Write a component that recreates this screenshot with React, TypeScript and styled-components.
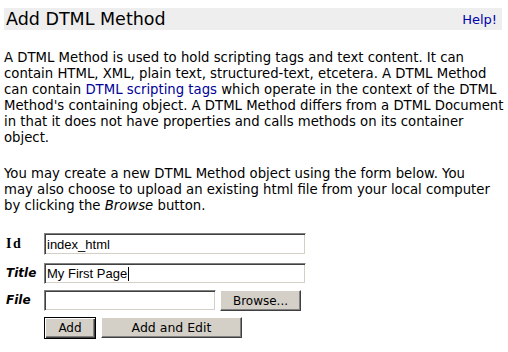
import React from "react";
import styled, { createGlobalStyle } from "styled-components";

const GlobalStyle = createGlobalStyle`
  html, body { margin: 0; padding: 0; background: #ffffff; }
`;

const Page = styled.div`
  padding: 8px 6px 0 4px;
  font-family: "DejaVu Sans", Verdana, sans-serif;
  font-size: 13.25px;
  color: #000000;
`;

const Header = styled.div`
  display: flex;
  justify-content: space-between;
  align-items: center;
  height: 22px;
  background: #eeeeee;
  padding: 0 5px 0 2px;
`;

const Title = styled.h1`
  margin: 0;
  font-size: 17.5px;
  font-weight: normal;
  line-height: 22px;
  color: #000000;
`;

const HelpLink = styled.a`
  font-size: 13px;
  color: #0000aa;
  text-decoration: none;
`;

const Para = styled.p`
  margin: 20px 0 0;
  line-height: 16px;
  white-space: nowrap;
`;

const InlineLink = styled.a`
  color: #000099;
  text-decoration: none;
`;

const Form = styled.form`
  display: grid;
  grid-template-columns: 40px auto;
  row-gap: 6px;
  margin-top: 19px;
  align-items: start;
`;

const Label = styled.label<{ $serif?: boolean }>`
  font-family: ${(p) =>
    p.$serif ? `"Liberation Serif", "Times New Roman", serif` : `"DejaVu Sans", Verdana, sans-serif`};
  font-size: ${(p) => (p.$serif ? "14px" : "12px")};
  letter-spacing: ${(p) => (p.$serif ? "1.5px" : "0")};
  font-weight: bold;
  font-style: ${(p) => (p.$serif ? "normal" : "italic")};
  padding: ${(p) => (p.$serif ? "3px 0 0 2px" : "2px 0 0 2px")};
  line-height: 16px;
`;

const FieldRow = styled.div<{ $extra?: number }>`
  display: flex;
  gap: 4px;
  align-items: center;
  padding-bottom: ${(p) => p.$extra ?? 0}px;
`;

const InputWrap = styled.div`
  position: relative;
  display: flex;
`;

const Caret = styled.span<{ $left: number }>`
  position: absolute;
  left: ${(p) => p.$left}px;
  top: 4px;
  width: 1px;
  height: 14px;
  background: #000000;
`;

const TextInput = styled.input<{ $w: number; $h?: number }>`
  box-sizing: border-box;
  width: ${(p) => p.$w}px;
  height: ${(p) => p.$h ?? 21}px;
  margin: 0;
  padding: 0 2px;
  border: 1px solid;
  border-color: #808080 #ffffff #ffffff #808080;
  box-shadow: inset 1px 1px #404040, inset -1px -1px #d4d0c8;
  font-family: "Liberation Sans", Arial, sans-serif;
  font-size: 13px;
  color: #000000;
  background: #ffffff;
  outline: none;
`;

const Button = styled.button<{ $w: number; $default?: boolean; $fs?: number }>`
  box-sizing: border-box;
  width: ${(p) => p.$w}px;
  height: ${(p) => (p.$default ? 22 : 21)}px;
  margin: 0;
  padding: 0;
  background: #d4d0c8;
  font-family: "DejaVu Sans", Verdana, sans-serif;
  font-size: ${(p) => p.$fs ?? 12}px;
  color: #000000;
  border: 1px solid;
  border-color: ${(p) => (p.$default ? "#000000" : "#ffffff #404040 #404040 #ffffff")};
  box-shadow: ${(p) =>
    p.$default
      ? "inset 1px 1px #ffffff, inset -1px -1px #404040, inset -2px -2px #808080"
      : "inset -1px -1px #808080"};
`;

const ButtonRow = styled.div`
  grid-column: 2;
  display: flex;
  gap: 5px;
`;

export default function App() {
  return (
    <>
      <GlobalStyle />
      <Page>
        <Header>
          <Title>Add DTML Method</Title>
          <HelpLink href="#">Help!</HelpLink>
        </Header>
        <Para>
          A DTML Method is used to hold scripting tags and text content. It can
          <br />
          contain HTML, XML, plain text, structured-text, etcetera. A DTML Method
          <br />
          can contain <InlineLink href="#">DTML scripting tags</InlineLink> which operate in the context of the DTML
          <br />
          Method's containing object. A DTML Method differs from a DTML Document
          <br />
          in that it does not have properties and calls methods on its container
          <br />
          object.
        </Para>
        <Para>
          You may create a new DTML Method object using the form below. You
          <br />
          may also choose to upload an existing html file from your local computer
          <br />
          by clicking the <em>Browse</em> button.
        </Para>
        <Form onSubmit={(e) => e.preventDefault()}>
          <Label $serif>Id</Label>
          <FieldRow $extra={2}>
            <TextInput $w={262} $h={22} defaultValue="index_html" />
          </FieldRow>
          <Label>Title</Label>
          <FieldRow>
            <InputWrap>
              <TextInput $w={262} defaultValue="My First Page" />
              <Caret $left={84} />
            </InputWrap>
          </FieldRow>
          <Label>File</Label>
          <FieldRow>
            <TextInput $w={172} defaultValue="" />
            <Button type="button" $w={81}>Browse...</Button>
          </FieldRow>
          <ButtonRow>
            <Button type="submit" $w={52} $default>Add</Button>
            <Button type="submit" $w={141} $fs={12.5}>Add and Edit</Button>
          </ButtonRow>
        </Form>
      </Page>
    </>
  );
}
